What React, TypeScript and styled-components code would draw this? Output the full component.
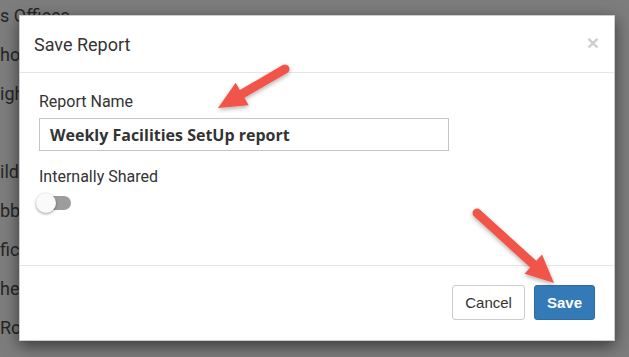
import React, { useState } from "react";
import styled, { createGlobalStyle } from "styled-components";

const GlobalStyle = createGlobalStyle`
  html, body {
    margin: 0;
    padding: 0;
    width: 629px;
    height: 357px;
    overflow: hidden;
    background: #7d7d7d;
  }
`;

const Page = styled.div`
  position: relative;
  width: 629px;
  height: 357px;
  overflow: hidden;
  background: #7d7d7d;
`;

const BackList = styled.ul`
  list-style: none;
  margin: 0;
  padding: 4px 0 0 0;
  display: flex;
  flex-direction: column;
`;

const BackItem = styled.li`
  height: 39px;
  font-family: Roboto, "Liberation Sans", sans-serif;
  font-size: 18px;
  line-height: 24px;
  color: #262626;
  white-space: nowrap;
`;

const Modal = styled.div`
  position: absolute;
  left: 19px;
  top: 15px;
  width: 596px;
  height: 326px;
  background: #fff;
  border: 1px solid rgba(0, 0, 0, 0.2);
  box-sizing: border-box;
  box-shadow: 0 5px 15px rgba(0, 0, 0, 0.55);
  display: flex;
  flex-direction: column;
`;

const Header = styled.div`
  height: 57px;
  box-sizing: border-box;
  padding: 0 15px 0 14px;
  border-bottom: 1px solid #e5e5e5;
  display: flex;
  align-items: center;
  justify-content: space-between;
`;

const Title = styled.h4`
  margin: 0;
  font-family: Roboto, "Liberation Sans", sans-serif;
  font-weight: 400;
  font-size: 18px;
  color: #333;
`;

const Close = styled.button`
  border: 0;
  background: none;
  padding: 0;
  margin-top: -3px;
  font-family: "Liberation Sans", Arial, sans-serif;
  font-size: 21px;
  font-weight: 700;
  line-height: 1;
  color: #cfcfcf;
  cursor: pointer;
`;

const Body = styled.div`
  flex: 1;
  padding: 18px 19px;
  display: flex;
  flex-direction: column;
  align-items: flex-start;
`;

const Label = styled.label<{ $gap?: number }>`
  font-family: Roboto, "Liberation Sans", sans-serif;
  font-size: 16px;
  line-height: 21px;
  color: #333;
  margin-bottom: ${(p) => p.$gap ?? 6}px;
`;

const NameInput = styled.input`
  width: 410px;
  height: 33px;
  box-sizing: border-box;
  border: 1px solid #c4c4c4;
  padding: 0 10px;
  font-family: "Open Sans", "Liberation Sans", sans-serif;
  font-weight: 700;
  font-size: 16px;
  color: #333;
  outline: none;
  margin-bottom: 15px;
`;

const Switch = styled.button<{ $on: boolean }>`
  position: relative;
  width: 35px;
  height: 20px;
  margin-left: -3px;
  border: 0;
  padding: 0;
  background: none;
  cursor: pointer;
  &::before {
    content: "";
    position: absolute;
    left: 4px;
    right: 0;
    top: 3px;
    height: 14px;
    border-radius: 7px;
    background: ${(p) => (p.$on ? "#8fb6db" : "#9c9c9c")};
  }
  &::after {
    content: "";
    position: absolute;
    top: 0;
    left: ${(p) => (p.$on ? "15px" : "0")};
    width: 20px;
    height: 20px;
    border-radius: 50%;
    background: ${(p) => (p.$on ? "#337ab7" : "#fafafa")};
    box-shadow: 0 1px 3px rgba(0, 0, 0, 0.4);
  }
`;

const Footer = styled.div`
  height: 75px;
  box-sizing: border-box;
  border-top: 1px solid #e5e5e5;
  padding: 0 19px 2px;
  display: flex;
  align-items: center;
  justify-content: flex-end;
  gap: 9px;
`;

const Button = styled.button<{ $primary?: boolean }>`
  height: 35px;
  padding: 0 12px;
  border-radius: 3px;
  border: 1px solid ${(p) => (p.$primary ? "#2e6da4" : "#ccc")};
  background: ${(p) => (p.$primary ? "#337ab7" : "#fff")};
  color: ${(p) => (p.$primary ? "#fff" : "#333")};
  font-family: "Liberation Sans", Arial, sans-serif;
  font-size: 15px;
  font-weight: ${(p) => (p.$primary ? 700 : 400)};
  cursor: pointer;
`;

const Arrows = styled.svg`
  position: absolute;
  left: 0;
  top: 0;
  pointer-events: none;
`;

const Arrow = ({ x1, y1, x2, y2 }: { x1: number; y1: number; x2: number; y2: number }) => {
  const dx = x2 - x1;
  const dy = y2 - y1;
  const len = Math.hypot(dx, dy);
  const ux = dx / len;
  const uy = dy / len;
  const head = 28;
  const half = 13;
  const bx = x2 - ux * head;
  const by = y2 - uy * head;
  const px = -uy;
  const py = ux;
  const pts = `${x2},${y2} ${bx + px * half},${by + py * half} ${bx - px * half},${by - py * half}`;
  return (
    <g filter="url(#shade)">
      <line x1={x1} y1={y1} x2={bx + ux * 4} y2={by + uy * 4} stroke="#f1554a" strokeWidth={9} strokeLinecap="round" />
      <polygon points={pts} fill="#f1554a" strokeLinejoin="round" />
    </g>
  );
};

const items = ["s Offices", "hood", "ights", "", "ilding", "bby", "fice", "her", "Rooms"];

export default function App() {
  const [shared, setShared] = useState(false);
  return (
    <Page>
      <GlobalStyle />
      <BackList>
        {items.map((t, i) => (
          <BackItem key={i}>{t}</BackItem>
        ))}
      </BackList>
      <Modal>
        <Header>
          <Title>Save Report</Title>
          <Close>×</Close>
        </Header>
        <Body>
          <Label>Report Name</Label>
          <NameInput defaultValue="Weekly Facilities SetUp report" />
          <Label $gap={6}>Internally Shared</Label>
          <Switch $on={shared} onClick={() => setShared(!shared)} />
        </Body>
        <Footer>
          <Button>Cancel</Button>
          <Button $primary>Save</Button>
        </Footer>
      </Modal>
      <Arrows width={629} height={357}>
        <defs>
          <filter id="shade" x="-20%" y="-20%" width="140%" height="140%">
            <feDropShadow dx="0" dy="2" stdDeviation="2" floodColor="#000" floodOpacity="0.3" />
          </filter>
        </defs>
        <Arrow x1={285} y1={69} x2={218} y2={108} />
        <Arrow x1={477} y1={213} x2={554} y2={283} />
      </Arrows>
    </Page>
  );
}
